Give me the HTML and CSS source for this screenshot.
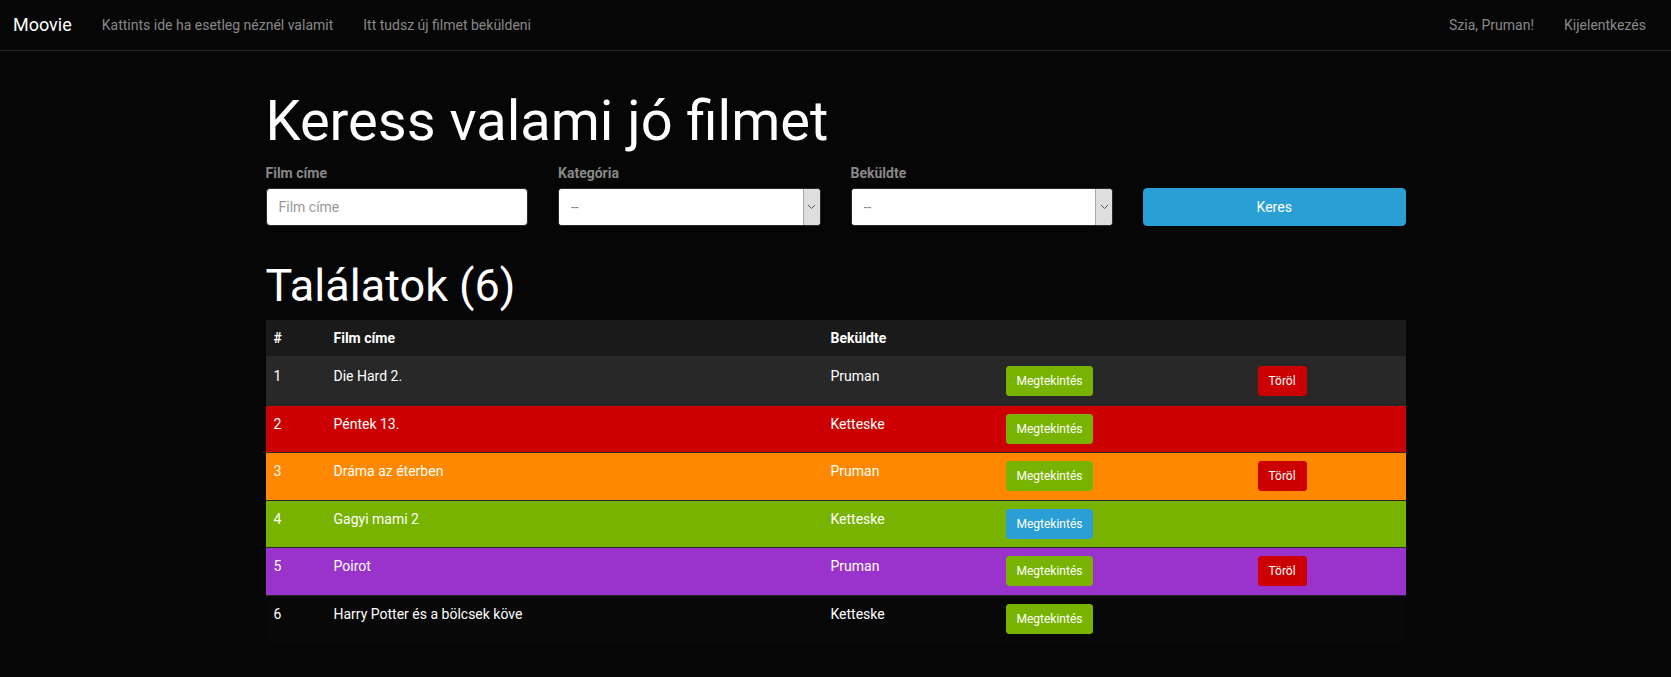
FILE: index.html
```html
<!DOCTYPE html>
<html lang="hu">
<head>
<meta charset="utf-8">
<title>Moovie</title>
<link rel="stylesheet" href="styles.css">
</head>
<body>
<nav class="navbar">
  <div class="nav-left">
    <a class="brand" href="#">Moovie</a>
    <a class="nav-link" href="#">Kattints ide ha esetleg néznél valamit</a>
    <a class="nav-link" href="#">Itt tudsz új filmet beküldeni</a>
  </div>
  <div class="nav-right">
    <a class="nav-link" href="#">Szia, Pruman!</a>
    <a class="nav-link" href="#">Kijelentkezés</a>
  </div>
</nav>

<main class="container">
  <h1 class="title">Keress valami jó filmet</h1>
  <form class="search">
    <div class="form-group">
      <label class="label">Film címe</label>
      <input class="form-control" type="text" placeholder="Film címe">
    </div>
    <div class="form-group">
      <label class="label">Kategória</label>
      <div class="select-wrap">
        <select class="select"><option>--</option></select>
        <span class="select-arrow"><svg width="9" height="6" viewBox="0 0 9 6"><path d="M1 1 L4.5 4.5 L8 1" fill="none" stroke="#555" stroke-width="1"/></svg></span>
      </div>
    </div>
    <div class="form-group">
      <label class="label">Beküldte</label>
      <div class="select-wrap">
        <select class="select"><option>--</option></select>
        <span class="select-arrow"><svg width="9" height="6" viewBox="0 0 9 6"><path d="M1 1 L4.5 4.5 L8 1" fill="none" stroke="#555" stroke-width="1"/></svg></span>
      </div>
    </div>
    <div class="form-group action">
      <button class="btn btn-primary btn-block" type="button">Keres</button>
    </div>
  </form>

  <h2 class="subtitle">Találatok (6)</h2>
  <table class="table">
    <colgroup>
      <col class="c-num"><col class="c-title"><col class="c-user"><col class="c-view"><col class="c-del">
    </colgroup>
    <thead>
      <tr><th>#</th><th>Film címe</th><th>Beküldte</th><th></th><th></th></tr>
    </thead>
    <tbody>
      <tr class="row-active">
        <td>1</td><td>Die Hard 2.</td><td>Pruman</td>
        <td><button class="btn btn-sm btn-success" type="button">Megtekintés</button></td>
        <td><button class="btn btn-sm btn-danger" type="button">Töröl</button></td>
      </tr>
      <tr class="row-danger">
        <td>2</td><td>Péntek 13.</td><td>Ketteske</td>
        <td><button class="btn btn-sm btn-success" type="button">Megtekintés</button></td>
        <td></td>
      </tr>
      <tr class="row-warning">
        <td>3</td><td>Dráma az éterben</td><td>Pruman</td>
        <td><button class="btn btn-sm btn-success" type="button">Megtekintés</button></td>
        <td><button class="btn btn-sm btn-danger" type="button">Töröl</button></td>
      </tr>
      <tr class="row-success">
        <td>4</td><td>Gagyi mami 2</td><td>Ketteske</td>
        <td><button class="btn btn-sm btn-primary" type="button">Megtekintés</button></td>
        <td></td>
      </tr>
      <tr class="row-info">
        <td>5</td><td>Poirot</td><td>Pruman</td>
        <td><button class="btn btn-sm btn-success" type="button">Megtekintés</button></td>
        <td><button class="btn btn-sm btn-danger" type="button">Töröl</button></td>
      </tr>
      <tr class="row-plain">
        <td>6</td><td>Harry Potter és a bölcsek köve</td><td>Ketteske</td>
        <td><button class="btn btn-sm btn-success" type="button">Megtekintés</button></td>
        <td></td>
      </tr>
    </tbody>
  </table>
</main>
</body>
</html>
```

FILE: styles.css
```css
* { box-sizing: border-box; }

html, body {
  margin: 0;
  padding: 0;
}

body {
  background: #060606;
  color: #888;
  font-family: Roboto, "Liberation Sans", sans-serif;
  font-size: 14px;
  line-height: 1.428571;
}

/* Navbar */
.navbar {
  display: flex;
  justify-content: space-between;
  align-items: stretch;
  height: 51px;
  border-bottom: 1px solid #282828;
  background: #060606;
  padding: 0 10px 0 0;
}

.nav-left, .nav-right {
  display: flex;
  align-items: stretch;
}

.brand {
  color: #fff;
  font-size: 18px;
  line-height: 20px;
  padding: 15px 15px 15px 13px;
  text-decoration: none;
}

.nav-link {
  color: #888;
  text-decoration: none;
  padding: 15px 15px;
  line-height: 20px;
}

/* Container */
.container {
  width: 1170px;
  margin: 0 auto;
  padding: 20px 15px 0;
}

.title {
  color: #fff;
  font-size: 56px;
  font-weight: 400;
  line-height: 1.1;
  margin: 20px 0 10px;
}

.subtitle {
  color: #fff;
  font-size: 45px;
  font-weight: 400;
  line-height: 1.1;
  margin: 20px 0 10px;
}

/* Search form */
.search {
  display: grid;
  grid-template-columns: repeat(4, 1fr);
  column-gap: 30px;
}

.form-group {
  margin-bottom: 15px;
}

.form-group.action {
  padding-top: 25px;
}

.label {
  display: block;
  font-weight: 700;
  color: #888;
  margin-bottom: 5px;
  line-height: 20px;
}

.form-control {
  display: block;
  width: 100%;
  height: 38px;
  padding: 8px 12px;
  font-family: inherit;
  font-size: 14px;
  line-height: 20px;
  color: #888;
  background: #fff;
  border: 1px solid #282828;
  border-radius: 4px;
  outline: none;
}

.form-control::placeholder {
  color: #999;
}

.select-wrap {
  display: flex;
  height: 38px;
  background: #fff;
  border: 1px solid #282828;
  border-radius: 4px;
  overflow: hidden;
}

.select {
  flex: 1;
  min-width: 0;
  appearance: none;
  -webkit-appearance: none;
  border: 0;
  background: #fff;
  color: #888;
  font-family: inherit;
  font-size: 14px;
  padding: 0 12px;
  outline: none;
}

.select-arrow {
  width: 17px;
  display: flex;
  align-items: center;
  justify-content: center;
  background: #dedede;
  border-left: 1px solid #a9a9a9;
}

/* Buttons */
.btn {
  display: inline-block;
  font-family: inherit;
  color: #fff;
  border: 1px solid transparent;
  cursor: pointer;
  text-align: center;
}

.btn-block {
  display: block;
  width: 100%;
  height: 38px;
  font-size: 14px;
  line-height: 20px;
  padding: 8px 12px;
  border-radius: 4px;
}

.btn-sm {
  font-size: 12px;
  line-height: 1.5;
  padding: 5px 10px;
  border-radius: 3px;
  height: 30px;
}

.btn-primary { background: #2a9fd6; border-color: #2a9fd6; }
.btn-success { background: #77b300; border-color: #77b300; }
.btn-danger { background: #cc0000; border-color: #cc0000; }

/* Table */
.table {
  width: 100%;
  border-collapse: collapse;
  border-spacing: 0;
  table-layout: fixed;
}

.c-num { width: 60px; }
.c-title { width: 497px; }
.c-user { width: 175px; }
.c-view { width: 252px; }

.table th {
  background: #1a1a1a;
  color: #fff;
  font-weight: 700;
  text-align: left;
  padding: 8px;
  line-height: 20px;
  vertical-align: bottom;
  border-bottom: 2px solid #282828;
}

.table td {
  padding: 8px 8px 8.5px;
  line-height: 20px;
  vertical-align: top;
  color: #fff;
  border-top: 1px solid #282828;
}

.row-active td { background: #282828; }
.row-danger td { background: #cc0000; }
.row-warning td { background: #ff8800; }
.row-success td { background: #77b300; }
.row-info td { background: #9933cc; }
.row-plain td { background: #080808; }
```
